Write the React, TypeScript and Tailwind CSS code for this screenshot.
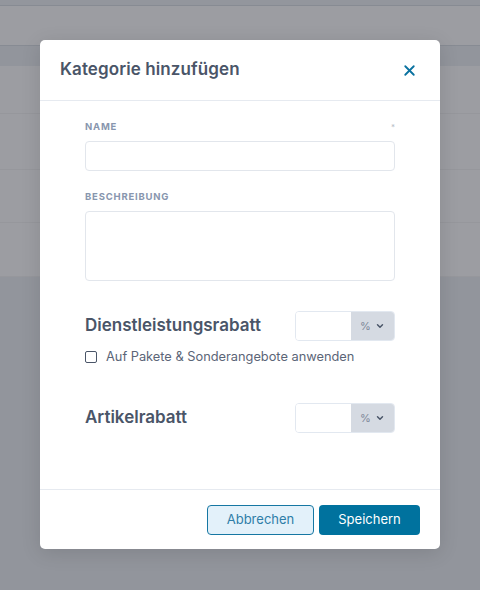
import { X, ChevronDown } from "lucide-react";

const rows = [48, 56, 53, 54];

function DiscountRow({ label }: { label: string }) {
  return (
    <div className="flex h-[30px] items-center justify-between">
      <span className="text-[17px] font-semibold text-[#4a5568]">{label}</span>
      <div className="flex h-[30px] w-[100px] overflow-hidden rounded border border-[#e2e8f0]">
        <div className="w-[55px] bg-white" />
        <div className="flex flex-1 items-center justify-center gap-1 bg-[#d5dae2] text-[11px] text-[#7d8799]">
          <span>%</span>
          <ChevronDown size={10} strokeWidth={3.5} className="text-[#4a5568]" />
        </div>
      </div>
    </div>
  );
}

export default function App() {
  return (
    <div className="relative h-[590px] w-[480px] overflow-hidden bg-[#92959c] font-['Inter',sans-serif]">
      {/* dimmed page behind the dialog */}
      <div className="h-[6px] border-b border-[#878b93] bg-[#93969d]" />
      <div className="h-[40px] border-b border-[#878b93] bg-[#9c9da2]" />
      <div className="h-[20px] bg-[#92959c]" />
      {rows.map((h, i) => (
        <div
          key={i}
          style={{ height: h }}
          className="border-b border-[#96979c] bg-[#9c9da2] last:border-b-0"
        />
      ))}

      <div className="absolute inset-0 flex items-start justify-center pt-[40px]">
        <div className="w-[400px] rounded-[5px] bg-white shadow-[0_4px_20px_rgba(0,0,0,0.12)]">
          <div className="flex h-[61px] items-center justify-between border-b border-[#e6eaf0] pl-5 pr-[22px]">
            <h2 className="text-[17px] font-semibold tracking-[0.1px] text-[#4a5568]">
              Kategorie hinzufügen
            </h2>
            <X size={17} strokeWidth={2.6} className="text-[#0a72a0]" />
          </div>

          <div className="px-[45px] pb-[56px] pt-[20px]">
            <div className="flex h-[12px] items-center justify-between leading-[12px]">
              <label className="text-[9.5px] font-bold uppercase tracking-[0.8px] text-[#8896ae]">
                Name
              </label>
              <span className="text-[8px] text-[#b8bec8]">*</span>
            </div>
            <div className="mt-[8px] h-[30px] rounded border border-[#e2e6ec]" />

            <label className="mt-[20px] block h-[12px] text-[9.5px] font-bold uppercase leading-[12px] tracking-[0.8px] text-[#8896ae]">
              Beschreibung
            </label>
            <div className="mt-[8px] h-[70px] rounded border border-[#e2e6ec]" />

            <div className="mt-[30px]">
              <DiscountRow label="Dienstleistungsrabatt" />
            </div>
            <label className="mt-[8px] flex h-[16px] items-center gap-[9px] text-[12.8px] leading-[16px] text-[#5b6577]">
              <span className="h-[12px] w-[12px] rounded-[2px] border border-[#4a5568]" />
              Auf Pakete &amp; Sonderangebote anwenden
            </label>

            <div className="mt-[38px]">
              <DiscountRow label="Artikelrabatt" />
            </div>
          </div>

          <div className="flex h-[60px] items-center justify-end gap-[5px] border-t border-[#e6eaf0] px-5">
            <button className="h-[30px] w-[107px] rounded border border-[#1677a3] bg-[#e3f1fa] text-[13px] text-[#2f7ea8]">
              Abbrechen
            </button>
            <button className="h-[30px] w-[101px] rounded bg-[#00729e] text-[13px] text-white">
              Speichern
            </button>
          </div>
        </div>
      </div>
    </div>
  );
}
